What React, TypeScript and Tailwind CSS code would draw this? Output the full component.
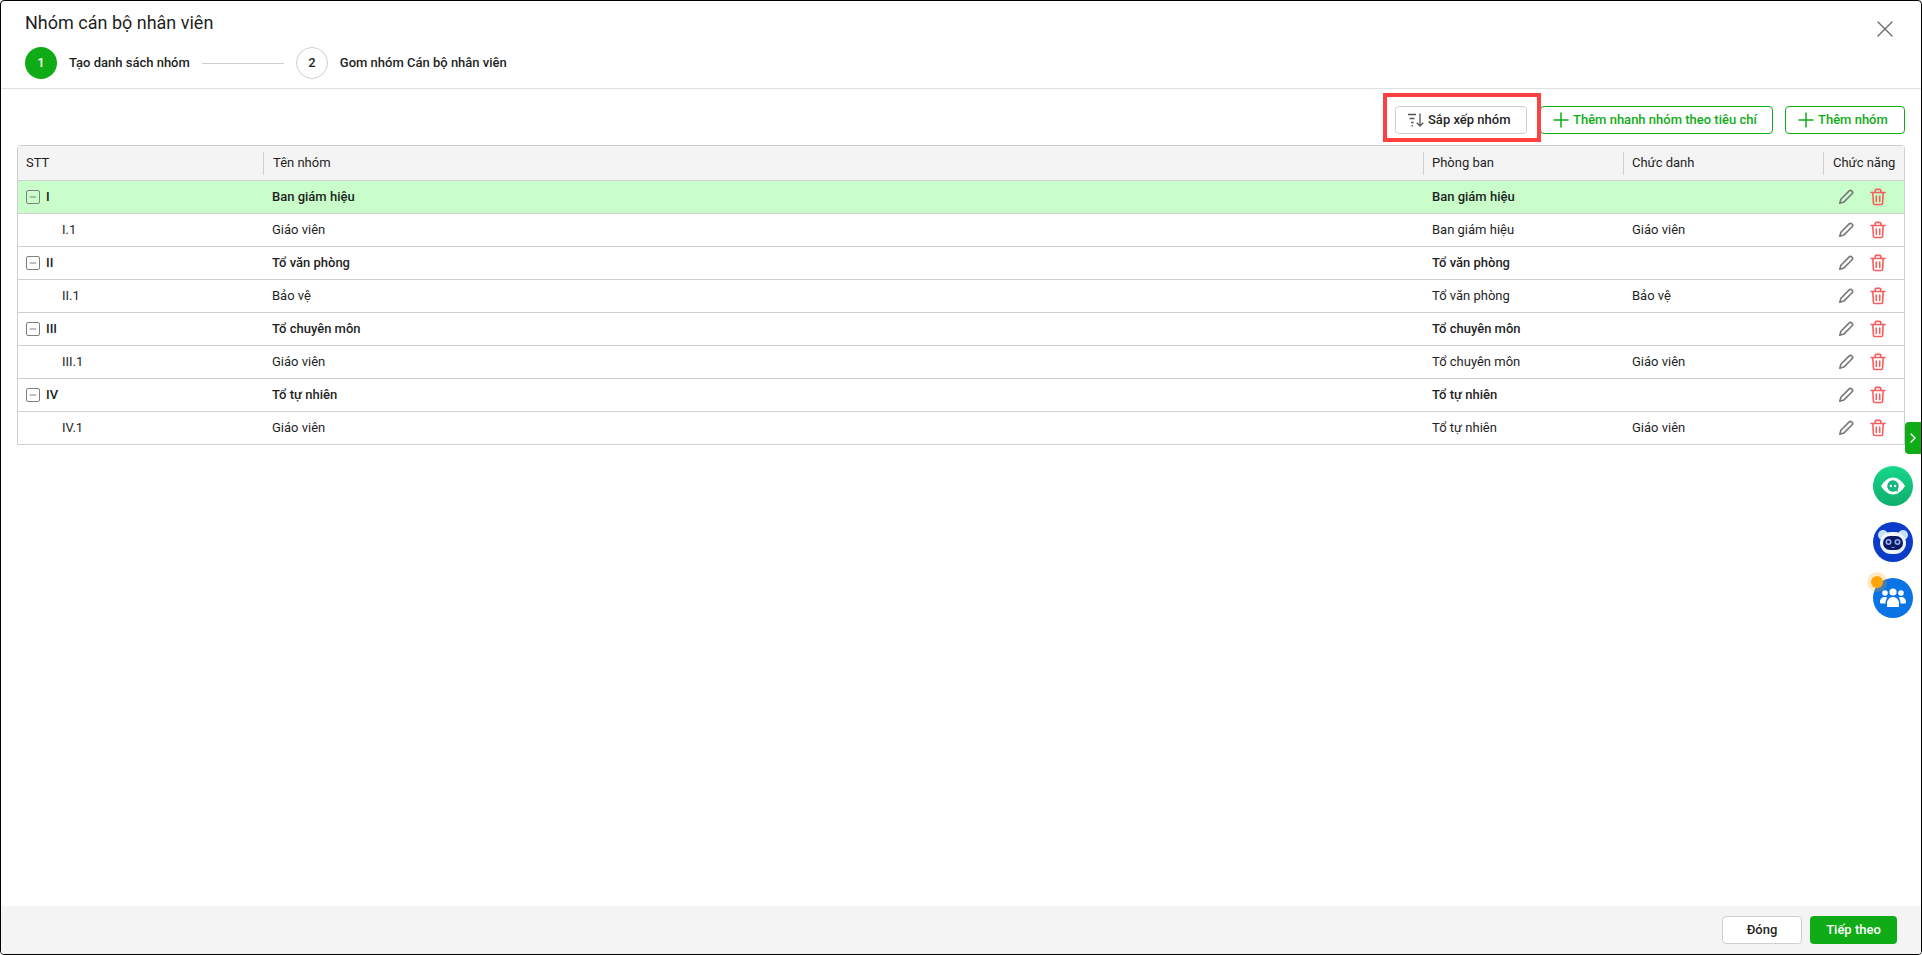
import React from 'react';
import { Plus, Minus, X, ChevronRight } from 'lucide-react';

interface GroupRow {
  stt: string;
  name: string;
  dept: string;
  title?: string;
  parent?: boolean;
  active?: boolean;
}

const rows: GroupRow[] = [
  { stt: 'I', name: 'Ban giám hiệu', dept: 'Ban giám hiệu', parent: true, active: true },
  { stt: 'I.1', name: 'Giáo viên', dept: 'Ban giám hiệu', title: 'Giáo viên' },
  { stt: 'II', name: 'Tổ văn phòng', dept: 'Tổ văn phòng', parent: true },
  { stt: 'II.1', name: 'Bảo vệ', dept: 'Tổ văn phòng', title: 'Bảo vệ' },
  { stt: 'III', name: 'Tổ chuyên môn', dept: 'Tổ chuyên môn', parent: true },
  { stt: 'III.1', name: 'Giáo viên', dept: 'Tổ chuyên môn', title: 'Giáo viên' },
  { stt: 'IV', name: 'Tổ tự nhiên', dept: 'Tổ tự nhiên', parent: true },
  { stt: 'IV.1', name: 'Giáo viên', dept: 'Tổ tự nhiên', title: 'Giáo viên' },
];

const PencilIcon = () => (
  <svg width="16" height="16" viewBox="0 0 16 16" fill="none" stroke="#777" strokeWidth="1.6" strokeLinejoin="round">
    <path d="M11.2 1.9c.7-.7 1.800-.7 2.500 0l.4.4c.7.7.7 1.800 0 2.500l-8.300 8.300-4 1.100 1.100-4z" />
  </svg>
);

const TrashIcon = () => (
  <svg width="16" height="18" viewBox="0 0 16 18" fill="none" stroke="#f65f5f" strokeWidth="1.6" strokeLinecap="round" strokeLinejoin="round">
    <path d="M1 4.500h14" />
    <path d="M5.200 4.500V2.400c0-.6.4-1 1-1h3.600c.6 0 1 .4 1 1v2.100" />
    <path d="M2.800 4.500l.6 10.700c0 .8.600 1.300 1.300 1.300h6.600c.7 0 1.300-.5 1.300-1.300l.6-10.700" />
    <path d="M6.300 8v5.500M9.700 8v5.500" />
  </svg>
);

const SortIcon = () => (
  <svg width="16" height="14" viewBox="0 0 16 14" fill="none" stroke="#555" strokeWidth="1.300" strokeLinejoin="round">
    <path d="M0 1.500h8M1.500 5.500h5M3 9.500h2.500M3.500 12.800h1.500" />
    <path d="M12 .5v12.500M8.700 9.700l3.300 3.300 3.300-3.300" />
  </svg>
);

const ChatBadge = () => (
  <div className="size-10 rounded-full bg-gradient-to-b from-[#16d78a] to-[#0fae6c] flex items-center justify-center">
    <svg width="26" height="20" viewBox="0 0 26 20">
      <path d="M1 10C4.500 4.500 8.500 1.500 13 1.500S21.500 4.500 25 10c-3.500 5.500-7.500 8.500-12 8.500S4.500 15.500 1 10z" fill="#fff" />
      <path d="M13 4.300a5.700 5.700 0 0 1 5.700 5.700c0 1.300-.4 2.500-1.200 3.500l.7 2.200-2.500-.7A5.700 5.700 0 1 1 13 4.300z" fill="#12b97a" />
      <circle cx="10.900" cy="10" r="1.200" fill="#fff" />
      <circle cx="15.100" cy="10" r="1.200" fill="#fff" />
    </svg>
  </div>
);

const RobotBadge = () => (
  <div className="size-10 rounded-full bg-[#0a3cc9] flex items-center justify-center">
    <svg width="32" height="28" viewBox="0 0 32 28">
      <circle cx="6" cy="7" r="5" fill="#c9e0fb" />
      <circle cx="26" cy="7" r="5" fill="#c9e0fb" />
      <rect x="3" y="4" width="26" height="22" rx="11" fill="#eef5ff" />
      <rect x="6" y="8" width="20" height="14" rx="7" fill="#0c1a66" />
      <circle cx="11.500" cy="14" r="3" fill="#8fb2ec" />
      <circle cx="20.500" cy="14" r="3" fill="#8fb2ec" />
      <circle cx="11.500" cy="14" r="1.400" fill="#0c1a66" />
      <circle cx="20.500" cy="14" r="1.400" fill="#0c1a66" />
      <path d="M14.500 19c.8.800 2.200.8 3 0" stroke="#8fb2ec" strokeWidth="1" fill="none" />
    </svg>
  </div>
);

const TeamBadge = () => (
  <div className="relative size-10 rounded-full bg-[#0a74e6] flex items-center justify-center">
    <svg width="26" height="20" viewBox="0 0 26 20" fill="#fff">
      <circle cx="13" cy="4" r="3.600" />
      <circle cx="5" cy="5" r="2.800" />
      <circle cx="21" cy="5" r="2.800" />
      <path d="M7 19v-4c0-3 2.600-6 6-6s6 3 6 6v4z" />
      <path d="M0 14c0-3 2-5 5-5 1 0 1.800.2 2.400.7C6 11 5.500 13 5.500 15.500H1.500C.5 15.500 0 15 0 14z" />
      <path d="M26 14c0-3-2-5-5-5-1 0-1.800.2-2.400.7 1.400 1.300 1.900 3.300 1.900 5.800h4C25.500 15.500 26 15 26 14z" />
    </svg>
    <span className="absolute -left-[6px] -top-[6px] size-5 rounded-full bg-[#ffa50a]/25 flex items-center justify-center">
      <span className="size-3 rounded-full bg-[#ffa50a]" />
    </span>
  </div>
);

const gridCols = 'grid grid-cols-[245px_1160px_200px_200px_1fr]';

export default function App() {
  return (
    <div className="relative w-[1922px] h-[955px] bg-white overflow-hidden font-['Roboto',sans-serif] text-[13px] text-[#1f1f1f]">
      <div className="h-full flex flex-col border border-black rounded-[4px] overflow-hidden">
        {/* header */}
        <div className="h-[88px] shrink-0 border-b border-[#e0e0e0] pl-6 relative">
          <div className="pt-[10px] text-[18px] leading-6 font-normal">Nhóm cán bộ nhân viên</div>
          <div className="mt-[12px] flex items-center font-medium">
            <span className="size-8 rounded-full bg-[#10ac18] text-white flex items-center justify-center">1</span>
            <span className="ml-3">Tạo danh sách nhóm</span>
            <span className="ml-3 w-[82px] h-px bg-[#cfcfcf]" />
            <span className="ml-3 size-8 rounded-full border border-[#cfcfcf] flex items-center justify-center">2</span>
            <span className="ml-3">Gom nhóm Cán bộ nhân viên</span>
          </div>
          <X className="absolute right-[22px] top-[14px] text-[#6b6b6b]" size={28} strokeWidth={1.2} />
        </div>

        {/* body */}
        <div className="flex-1 pl-4 pr-4">
          <div className="h-[56px] pt-[17px] flex justify-end gap-3 font-medium">
            <button className="h-[28px] w-[132px] mr-px border border-[#cfcfcf] rounded flex items-center pl-3 gap-1">
              <SortIcon />
              Sắp xếp nhóm
            </button>
            <button className="h-[28px] w-[233px] border border-[#10ac18] rounded text-[#10ac18] flex items-center pl-2">
              <Plus size={24} strokeWidth={1.5} />
              Thêm nhanh nhóm theo tiêu chí
            </button>
            <button className="h-[28px] w-[120px] border border-[#10ac18] rounded text-[#10ac18] flex items-center pl-2">
              <Plus size={24} strokeWidth={1.5} />
              Thêm nhóm
            </button>
          </div>

          <div className="border-x border-t border-[#cfcfcf] rounded-t">
            <div className={`${gridCols} h-[35px] bg-[#f4f4f4] items-center border-b border-[#cfcfcf]`}>
              <div className="pl-2">STT</div>
              <div className="pl-[9px] border-l border-[#cfcfcf] h-[23px] flex items-center">Tên nhóm</div>
              <div className="pl-2 border-l border-[#cfcfcf] h-[23px] flex items-center">Phòng ban</div>
              <div className="pl-2 border-l border-[#cfcfcf] h-[23px] flex items-center">Chức danh</div>
              <div className="pl-[9px] border-l border-[#cfcfcf] h-[23px] flex items-center whitespace-nowrap">Chức năng</div>
            </div>
            {rows.map((row) => (
              <div
                key={row.stt}
                className={`${gridCols} h-[33px] items-center border-b border-[#cfcfcf] ${row.active ? 'bg-[#c9fdc9]' : ''} ${row.parent ? 'font-medium' : ''}`}
              >
                {row.parent ? (
                  <div className="pl-2 flex items-center gap-[6px]">
                    <span className="size-[14px] border-[1.5px] border-[#808080] rounded-[2px] flex items-center justify-center">
                      <Minus size={10} strokeWidth={2.4} className="text-[#808080]" />
                    </span>
                    {row.stt}
                  </div>
                ) : (
                  <div className="pl-[44px]">{row.stt}</div>
                )}
                <div className="pl-[9px]">{row.name}</div>
                <div className="pl-[9px]">{row.dept}</div>
                <div className="pl-[9px]">{row.title}</div>
                <div className="pl-[15px] flex items-center gap-4">
                  <PencilIcon />
                  <TrashIcon />
                </div>
              </div>
            ))}
          </div>
        </div>

        {/* footer */}
        <div className="h-[48px] shrink-0 bg-[#f4f4f4] flex items-center justify-end gap-2 pr-6 font-medium">
          <button className="h-[28px] w-[80px] bg-white border border-[#cfcfcf] rounded">Đóng</button>
          <button className="h-[28px] w-[87px] bg-[#10ac18] text-white rounded">Tiếp theo</button>
        </div>
      </div>

      {/* highlight box */}
      <div className="absolute left-[1383px] top-[93px] w-[158px] h-[49px] border-[4px] border-[#ff4040]" />

      {/* floating widgets */}
      <div className="absolute left-[1905px] top-[422px] w-[16px] h-[32px] bg-[#10ac18] rounded-l flex items-center justify-center">
        <ChevronRight size={16} strokeWidth={2} className="text-white" />
      </div>
      <div className="absolute left-[1873px] top-[466px] flex flex-col gap-4">
        <ChatBadge />
        <RobotBadge />
        <TeamBadge />
      </div>
    </div>
  );
}
